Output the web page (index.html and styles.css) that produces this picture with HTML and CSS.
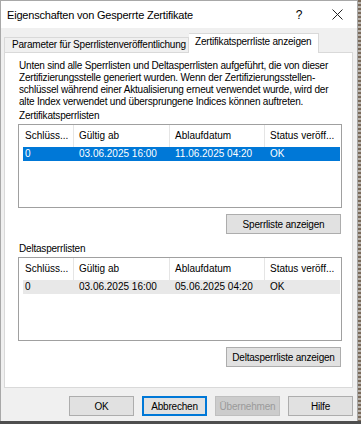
FILE: index.html
```html
<!DOCTYPE html>
<html lang="de">
<head>
<meta charset="utf-8">
<title>Eigenschaften von Gesperrte Zertifikate</title>
<link rel="stylesheet" href="styles.css">
</head>
<body>
<div class="window">
  <div class="titlebar">
    <span class="title">Eigenschaften von Gesperrte Zertifikate</span>
    <span class="help">?</span>
    <span class="close"><svg width="11" height="11" viewBox="0 0 11 11"><path d="M0.5 0.5 L10.5 10.5 M10.5 0.5 L0.5 10.5" stroke="#222" stroke-width="1" fill="none"/></svg></span>
  </div>
  <div class="tabs">
    <div class="tab">Parameter für Sperrlistenveröffentlichung</div>
    <div class="tab active">Zertifikatsperrliste anzeigen</div>
  </div>
  <div class="panel">
    <p class="intro">Unten sind alle Sperrlisten und Deltasperrlisten aufgeführt, die von dieser Zertifizierungsstelle generiert wurden. Wenn der Zertifizierungsstellen-schlüssel während einer Aktualisierung erneut verwendet wurde, wird der alte Index verwendet und übersprungene Indices können auftreten.</p>
    <div class="label">Zertifikatsperrlisten</div>
    <div class="list">
      <div class="row head">
        <span class="c1">Schlüss...</span><span class="c2">Gültig ab</span><span class="c3">Ablaufdatum</span><span class="c4">Status veröff...</span>
      </div>
      <div class="row data selected">
        <span class="c1">0</span><span class="c2">03.06.2025 16:00</span><span class="c3">11.06.2025 04:20</span><span class="c4">OK</span>
      </div>
    </div>
    <div class="btnrow"><button class="btn wide">Sperrliste anzeigen</button></div>
    <div class="label second">Deltasperrlisten</div>
    <div class="list">
      <div class="row head">
        <span class="c1">Schlüss...</span><span class="c2">Gültig ab</span><span class="c3">Ablaufdatum</span><span class="c4">Status veröff...</span>
      </div>
      <div class="row data inactive">
        <span class="c1">0</span><span class="c2">03.06.2025 16:00</span><span class="c3">05.06.2025 04:20</span><span class="c4">OK</span>
      </div>
    </div>
    <div class="btnrow"><button class="btn wide">Deltasperrliste anzeigen</button></div>
  </div>
  <div class="footer">
    <button class="btn">OK</button>
    <button class="btn focused">Abbrechen</button>
    <button class="btn disabled" disabled>Übernehmen</button>
    <button class="btn">Hilfe</button>
  </div>
</div>
</body>
</html>
```
FILE: styles.css
```css
* { box-sizing: border-box; }
html, body { margin: 0; padding: 0; }
body {
  width: 361px;
  height: 424px;
  overflow: hidden;
  background:
    repeating-linear-gradient(180deg, #7a6a5a 0 2px, #b9b4ae 2px 4px) right top / 3px 421px no-repeat,
    #4e4e4e;
  font-family: "Liberation Sans", Arial, sans-serif;
  font-size: 10px;
  color: #000;
}
.window {
  width: 358px;
  height: 421px;
  background: #f0f0f0;
  border: 1px solid #a8a8a8;
  border-bottom: none;
  display: flex;
  flex-direction: column;
}
.titlebar {
  height: 27px;
  background: #fff;
  display: flex;
  align-items: center;
  padding-left: 6px;
  flex: none;
}
.title {
  font-size: 11px;
  letter-spacing: -0.2px;
  flex: 1;
}
.help {
  font-size: 12px;
  width: 40px;
  margin-right: 13px;
  text-align: center;
}
.close {
  width: 12px;
  margin-right: 13px;
  display: flex;
}
.tabs {
  display: flex;
  margin-top: 5px;
  padding-left: 3px;
  height: 19px;
  flex: none;
  position: relative;
  z-index: 1;
}
.tab {
  margin-top: 4px;
  height: 15px;
  border: 1px solid #d9d9d9;
  border-bottom: none;
  background: #f0f0f0;
  padding: 0 0 0 7px;
  width: 185px;
  line-height: 13px;
  letter-spacing: -0.2px;
}
.tab.active {
  margin-top: 0;
  height: 20px;
  width: 130px;
  background: #fff;
  border-left: none;
  padding-left: 6px;
  line-height: 16px;
}
.panel {
  margin-left: 3px;
  width: 349px;
  height: 336px;
  background: #fff;
  border: 1px solid #d9d9d9;
  padding: 7px 0 0 13px;
  flex: none;
}
.intro {
  margin: 0 0 0 1px;
  width: 315px;
  line-height: 12px;
  letter-spacing: -0.2px;
}
.label {
  margin: 2px 0 0 1px;
  line-height: 12px;
  letter-spacing: -0.2px;
}
.label.second { margin-top: 9px; }
.list {
  margin-top: 2px;
  width: 324px;
  height: 84px;
  border: 1px solid #a0a0a0;
  padding: 0 1px 0 0;
}
.row {
  display: flex;
  white-space: nowrap;
}
.row.head {
  height: 22px;
  align-items: center;
}
.row.head span {
  height: 22px;
  line-height: 22px;
  border-right: 1px solid #e5e5e5;
}
.row.head .c4 { border-right: none; }
.row.data {
  height: 14px;
  line-height: 14px;
  margin-left: 4px;
}
.c1 { width: 55px; padding-left: 6px; }
.row.data .c1 { width: 51px; padding-left: 2px; }
.c2 { width: 96px; padding-left: 5px; }
.c3 { width: 95px; padding-left: 5px; }
.c4 { flex: 1; padding-left: 5px; }
.selected { background: #0078d7; color: #fff; }
.inactive { background: #e8e8e8; }
.btnrow {
  display: flex;
  justify-content: flex-end;
  width: 323px;
  margin-top: 6px;
}
.btn {
  font-family: "Liberation Sans", Arial, sans-serif;
  font-size: 10px;
  letter-spacing: -0.2px;
  height: 20px;
  width: 65px;
  padding: 0;
  background: #e1e1e1;
  border: 1px solid #adadad;
  color: #000;
}
.btn.wide { width: 115px; }
.footer {
  display: flex;
  justify-content: flex-end;
  gap: 8px;
  padding-right: 4px;
  margin-top: 8px;
}
.btn.focused {
  border: 1px solid #0078d7;
  box-shadow: inset 0 0 0 1px #0078d7;
}
.btn.disabled {
  background: #cccccc;
  border-color: #bfbfbf;
  color: #9a9a9a;
}
```
